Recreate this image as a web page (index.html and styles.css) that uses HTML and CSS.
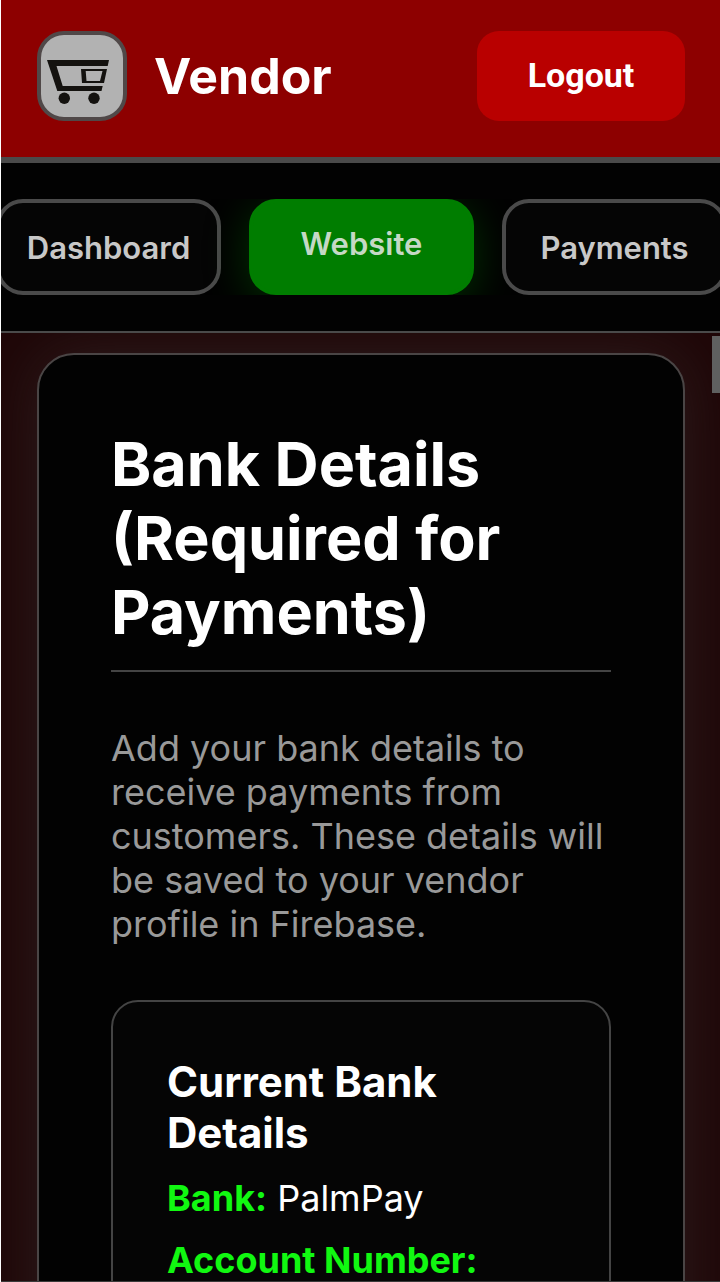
FILE: index.html
```html
<!DOCTYPE html>
<html lang="en">
<head>
  <meta charset="UTF-8" />
  <meta name="viewport" content="width=device-width, initial-scale=1.0"/>
  <title>Vendor</title>
  <link rel="stylesheet" href="styles.css">
</head>
<body>

  <header class="header">
    <div class="brand">
      <div class="logo">
        <svg viewBox="0 0 82 82" aria-hidden="true">
          <path fill="#14120f" d="M6 25H68L66.700 31H15.500L21.700 51H61.700L60.500 56H16.300Z"/>
          <path fill="#14120f" fill-rule="evenodd" d="M40 34H66L63 48H41ZM44.700 36L45.500 46H59L61.500 36Z"/>
          <circle cx="23.300" cy="63.300" r="5.700" fill="#14120f"/>
          <circle cx="53" cy="63.300" r="5.700" fill="#14120f"/>
        </svg>
      </div>
      <h1 class="brand-title">Vendor</h1>
    </div>
    <button class="logout-btn" type="button">Logout</button>
  </header>

  <nav class="nav">
    <div class="nav-track">
      <button class="nav-btn" type="button">Dashboard</button>
      <button class="nav-btn active" type="button">Website</button>
      <button class="nav-btn" type="button">Payments</button>
    </div>
  </nav>

  <main class="main">
    <section class="card">
      <h2 class="card-title">Bank Details (Required for Payments)</h2>
      <p class="card-text">Add your bank details to receive payments from customers. These details will be saved to your vendor profile in Firebase.</p>

      <div class="bank-box">
        <h3 class="bank-title">Current Bank Details</h3>
        <p class="bank-row"><strong>Bank:</strong> PalmPay</p>
        <p class="bank-row"><strong>Account Number:</strong></p>
      </div>
    </section>
    <div class="scroll-thumb"></div>
  </main>

</body>
</html>
```

FILE: styles.css
```css
* {
  margin: 0;
  padding: 0;
  box-sizing: border-box;
}

body {
  height: 100vh;
  display: flex;
  flex-direction: column;
  overflow: hidden;
  border-left: 1px solid #fff;
  background: #020202;
  color: white;
  font-family: Inter, sans-serif;
}

.header {
  flex: none;
  display: flex;
  justify-content: space-between;
  align-items: center;
  padding: 31px 35px 36px 36px;
  background: #8d0000;
  border-bottom: 6px solid #4a4a4a;
}

.brand {
  display: flex;
  align-items: center;
  gap: 27px;
}

.logo {
  width: 90px;
  height: 90px;
  border: 4px solid #504848;
  border-radius: 27px;
  background: #b2b2b2;
}

.logo svg {
  display: block;
  width: 100%;
  height: 100%;
}

.brand-title {
  font-size: 50px;
  font-weight: 700;
  line-height: 60px;
}

.logout-btn {
  width: 208px;
  height: 90px;
  padding-bottom: 2px;
  border: none;
  border-radius: 22px;
  background: #b90000;
  color: white;
  font-family: Roboto, sans-serif;
  font-size: 34px;
  font-weight: 700;
}

.nav {
  flex: none;
  padding: 36px 0 36px 2px;
  border-bottom: 2px solid #4a4a4a;
}

/* clips the glow of the active button */
.nav-track {
  display: flex;
  justify-content: center;
  gap: 28px;
  margin-left: -2px;
  padding-left: 2px;
  overflow: hidden;
}

.nav-btn {
  flex: none;
  width: 225px;
  height: 96px;
  border: 4px solid #4a4a4a;
  border-radius: 27px;
  background: #050505;
  color: #c8c8c8;
  font-family: inherit;
  font-size: 31px;
  font-weight: 600;
}

.nav-btn.active {
  padding-bottom: 8px;
  border-color: #007d00;
  background: #007d00;
  color: #c5d9c5;
  box-shadow: 0 8px 44px rgba(0, 125, 0, 0.4);
}

.main {
  flex: 1;
  min-height: 0;
  position: relative;
  overflow: hidden;
  padding: 20px 35px 0 36px;
  background: #1f0708;
  border-bottom: 1px solid #3a3a3a;
}

.card {
  padding: 72px;
  border: 2px solid #4a4545;
  border-radius: 37px;
  background: #020202;
  box-shadow: 0 0 60px rgba(60, 50, 50, 0.5);
}

.card-title {
  padding-bottom: 21px;
  margin-bottom: 54px;
  border-bottom: 2px solid #444;
  font-size: 61px;
  font-weight: 700;
  line-height: 74px;
}

.card-text {
  margin-bottom: 54px;
  color: #999;
  font-size: 36px;
  line-height: 44px;
}

.bank-box {
  padding: 54px;
  border: 2px solid #444;
  border-radius: 27px;
  background: #050505;
}

.bank-title {
  font-size: 42px;
  font-weight: 700;
  line-height: 51px;
}

.bank-row {
  margin-top: 18px;
  font-size: 36px;
  line-height: 44px;
}

.bank-row strong {
  color: #11f811;
  font-weight: 700;
}

.scroll-thumb {
  position: absolute;
  top: 3px;
  right: 0;
  width: 8px;
  height: 57px;
  background: #5f6060;
}
```
